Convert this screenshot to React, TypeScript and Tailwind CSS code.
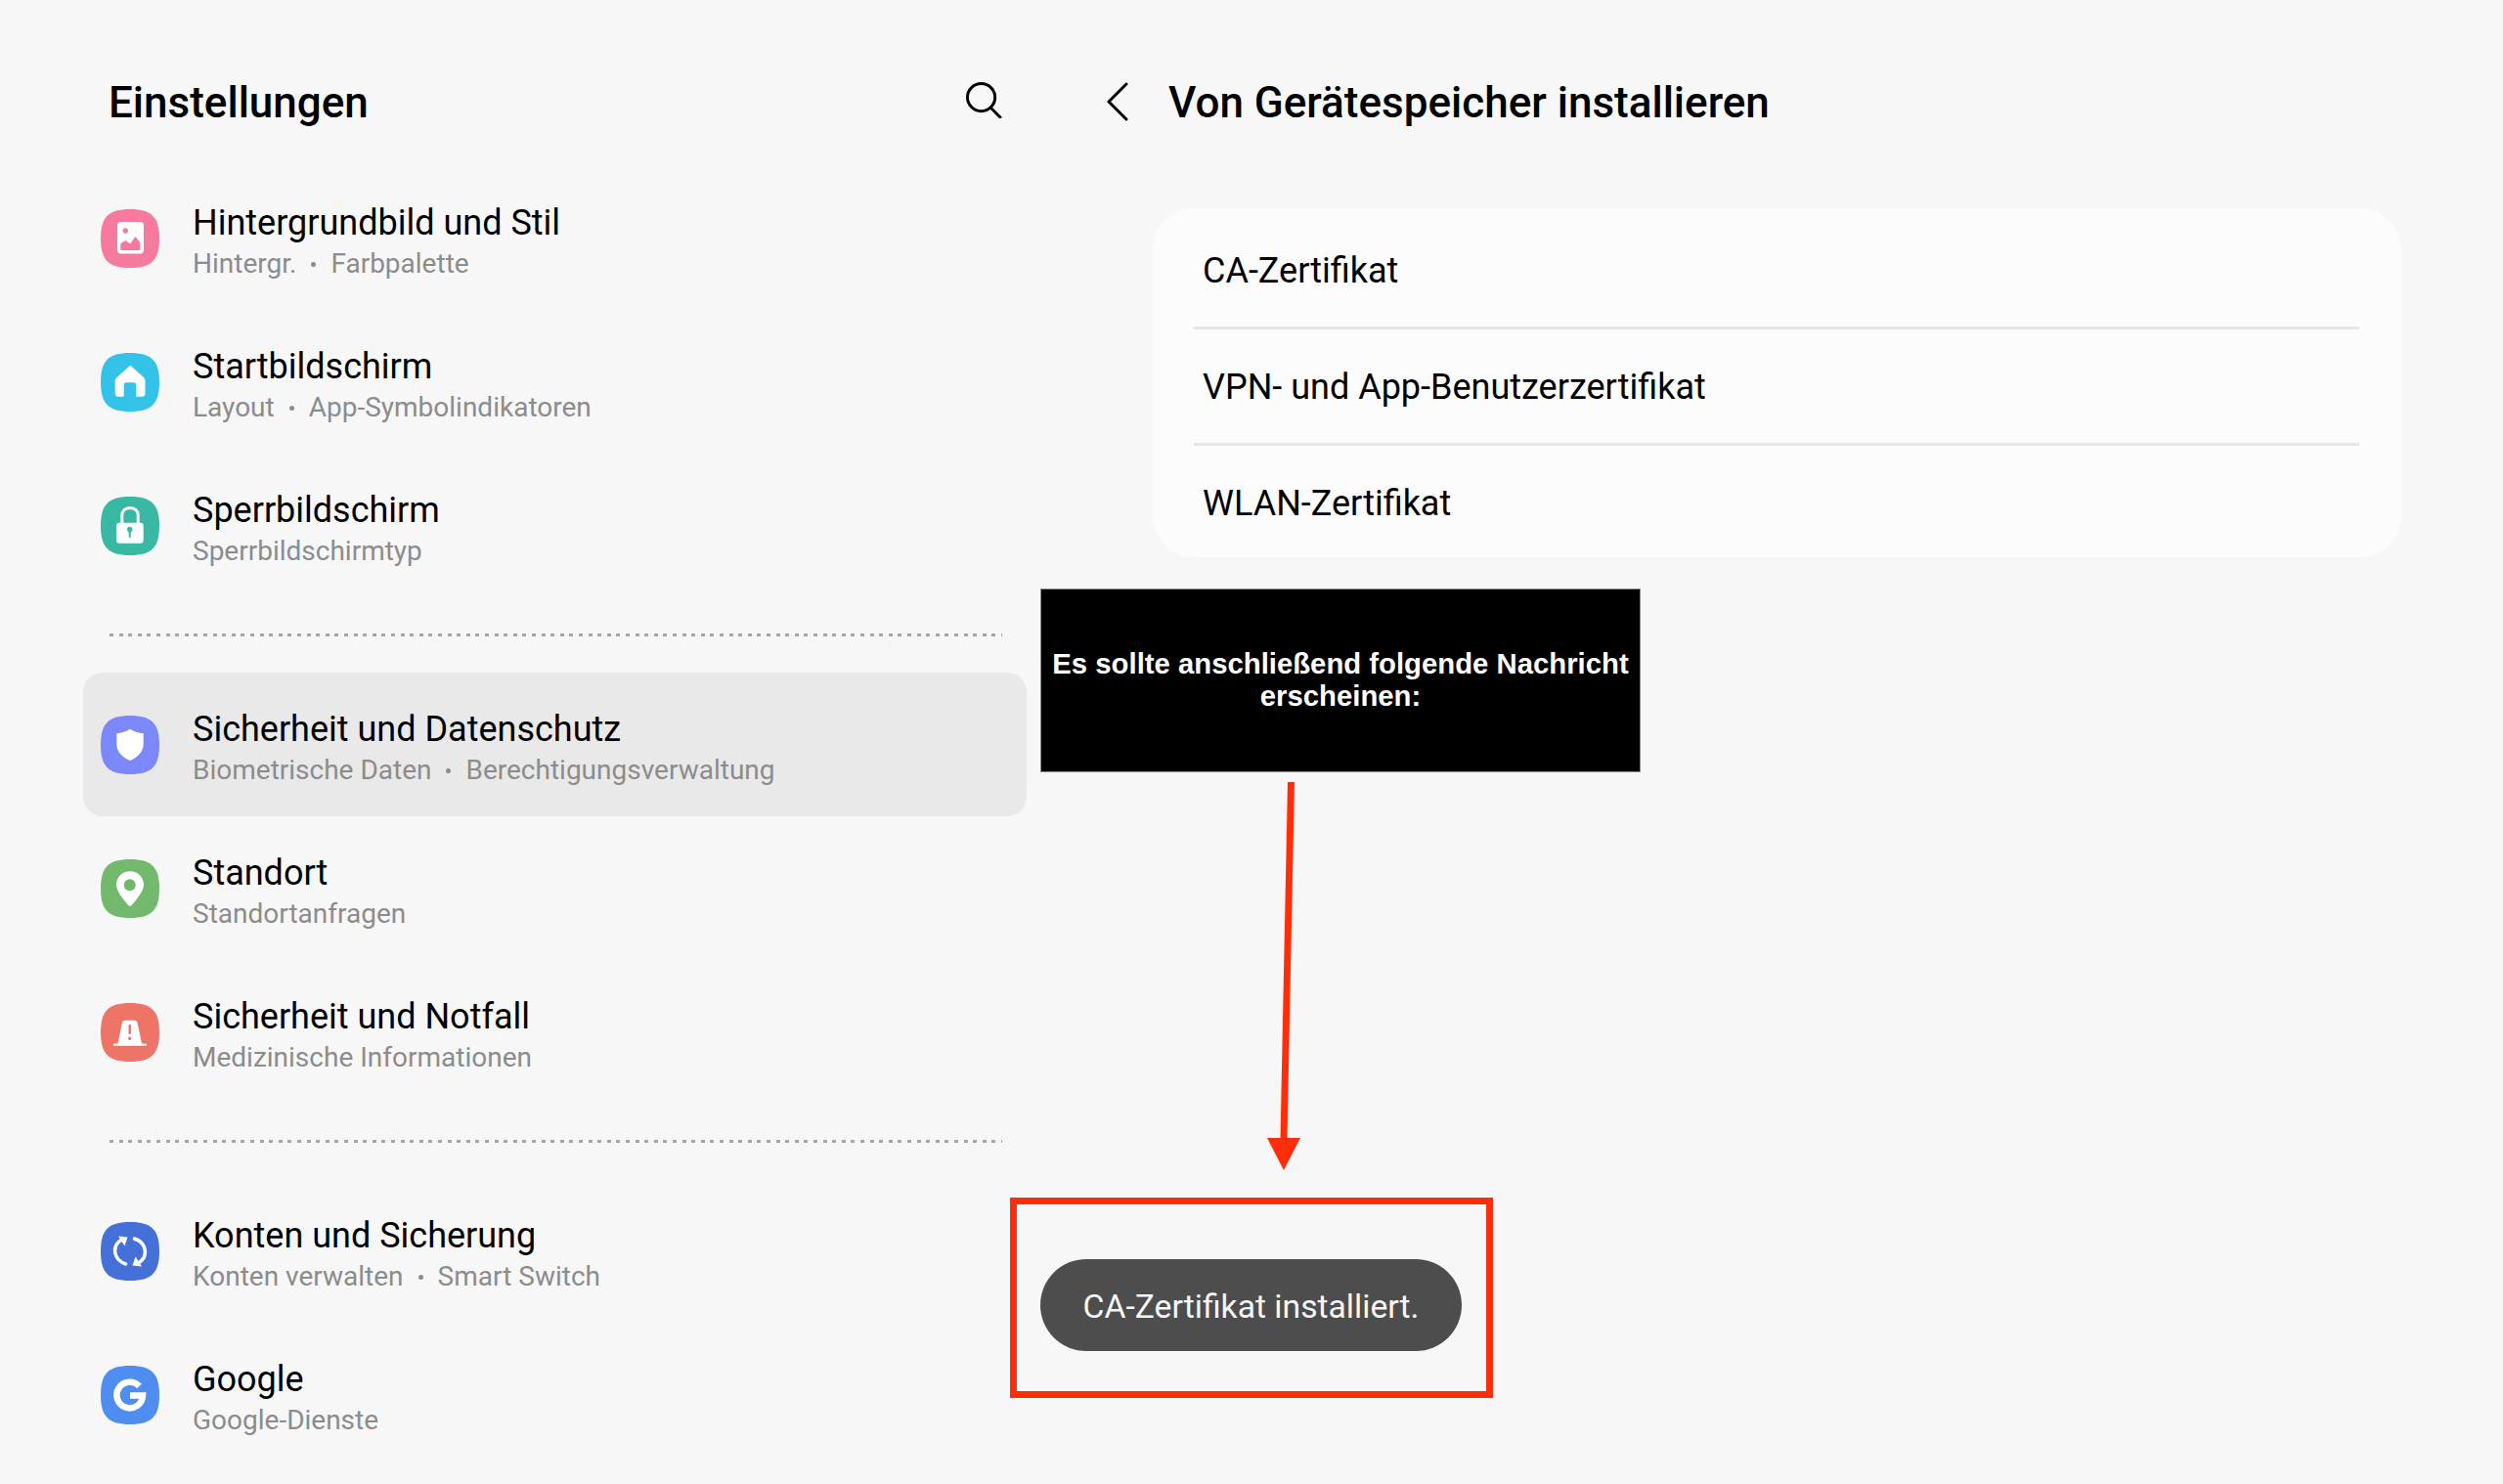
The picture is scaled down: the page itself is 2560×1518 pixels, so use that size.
import React from 'react';

const Squircle: React.FC<{ color: string; children: React.ReactNode }> = ({ color, children }) => (
  <svg viewBox="0 0 60 60" className="w-[60px] h-[60px] shrink-0">
    <path d="M30 0C52 0 60 8 60 30C60 52 52 60 30 60C8 60 0 52 0 30C0 8 8 0 30 0Z" fill={color} />
    {children}
  </svg>
);

const icons: Record<string, React.ReactNode> = {
  wallpaper: (
    <Squircle color="#f67a9d">
      <rect x="17" y="13" width="27" height="32.500" rx="4" fill="#fff" />
      <circle cx="25.300" cy="22" r="2.700" fill="#f67a9d" />
      <path d="M20.300 42V35.300L25.300 32L30.300 35.300L35.300 28L40.300 33.700V42Z" fill="#f67a9d" />
    </Squircle>
  ),
  home: (
    <Squircle color="#33c3e8">
      <path d="M30.300 12.700L44 25Q45.500 26.500 45.500 28.500V41Q45.500 44.700 42 44.700H36.300V33Q36.300 30.300 33.500 30.300H26.500Q23.700 30.300 23.700 33V44.700H18Q14.700 44.700 14.700 41V28.500Q14.700 26.500 16.500 25Z" fill="#fff" />
    </Squircle>
  ),
  lock: (
    <Squircle color="#39b8a4">
      <path d="M21.800 28V19.500C21.800 14.500 25 11.500 30 11.500C35 11.500 38.200 14.500 38.200 19.500V28" fill="none" stroke="#fff" strokeWidth="3" />
      <rect x="16" y="26.700" width="27.700" height="21" rx="3" fill="#fff" />
      <circle cx="29.700" cy="33.500" r="2.700" fill="#39b8a4" />
      <path d="M28.500 34H31L30.700 41.700H28.800Z" fill="#39b8a4" />
    </Squircle>
  ),
  shield: (
    <Squircle color="#7c88f9">
      <path d="M30 13.700Q36 17.500 43.700 18.300V29C43.700 37 38 42.500 30 46C22 42.500 16.300 37 16.300 29V18.300Q24 17.500 30 13.700Z" fill="#fff" />
    </Squircle>
  ),
  pin: (
    <Squircle color="#72b96e">
      <path d="M30 12.300C38 12.300 44 18.300 44 26C44 33 36 42 31.500 47.200Q30 48.500 28.500 47.200C24 42 16 33 16 26C16 18.300 22 12.300 30 12.300Z" fill="#fff" />
      <circle cx="29.700" cy="26.300" r="6" fill="#72b96e" />
    </Squircle>
  ),
  siren: (
    <Squircle color="#ef7468">
      <path d="M25 17.700H34.500Q37 17.700 37.500 20L42 41.500H46Q47 41.500 47 43.700H13Q13 41.500 14 41.500H17.500L22 20Q22.500 17.700 25 17.700Z" fill="#fff" />
      <rect x="28.500" y="22" width="2.500" height="10" rx="1" fill="#ef7468" />
      <circle cx="29.700" cy="36.300" r="1.700" fill="#ef7468" />
    </Squircle>
  ),
  sync: (
    <Squircle color="#4470d8">
      <path d="M21.500 18C11.500 24 12 38 25.500 43" fill="none" stroke="#fff" strokeWidth="3.500" strokeLinecap="round" />
      <path d="M18 14.500L27.500 15.500L24.500 24.500Z" fill="#fff" />
      <path d="M38.500 42C48.500 36 48 22 34.500 17" fill="none" stroke="#fff" strokeWidth="3.500" strokeLinecap="round" />
      <path d="M42 45.500L32.500 44.500L35.500 35.500Z" fill="#fff" />
    </Squircle>
  ),
  google: (
    <Squircle color="#4f8ef0">
      <path d="M39.500 21A13.300 13.300 0 1 0 43 30.500H30" fill="none" stroke="#fff" strokeWidth="6.500" />
    </Squircle>
  ),
};

type Item = { icon: string; title: string; sub: string[]; active?: boolean };

const groups: Item[][] = [
  [
    { icon: 'wallpaper', title: 'Hintergrundbild und Stil', sub: ['Hintergr.', 'Farbpalette'] },
    { icon: 'home', title: 'Startbildschirm', sub: ['Layout', 'App-Symbolindikatoren'] },
    { icon: 'lock', title: 'Sperrbildschirm', sub: ['Sperrbildschirmtyp'] },
  ],
  [
    { icon: 'shield', title: 'Sicherheit und Datenschutz', sub: ['Biometrische Daten', 'Berechtigungsverwaltung'], active: true },
    { icon: 'pin', title: 'Standort', sub: ['Standortanfragen'] },
    { icon: 'siren', title: 'Sicherheit und Notfall', sub: ['Medizinische Informationen'] },
  ],
  [
    { icon: 'sync', title: 'Konten und Sicherung', sub: ['Konten verwalten', 'Smart Switch'] },
    { icon: 'google', title: 'Google', sub: ['Google-Dienste'] },
  ],
];

const SettingsRow: React.FC<{ item: Item }> = ({ item }) => (
  <div className={`h-[147px] flex items-center gap-[34px] pl-[18px] rounded-[20px] ${item.active ? 'bg-[#e9e9e9]' : ''}`}>
    {icons[item.icon]}
    <div className="flex flex-col pt-[11px]">
      <span className="text-[36px] leading-[42px] text-black">{item.title}</span>
      <span className="text-[28px] leading-[42px] text-[#8c8c8c] flex items-center">
        {item.sub.map((s, i) => (
          <React.Fragment key={s}>
            {i > 0 && <span className="w-[5px] h-[5px] rounded-full bg-[#8c8c8c] mx-[15px]" />}
            {s}
          </React.Fragment>
        ))}
      </span>
    </div>
  </div>
);

const certs = ['CA-Zertifikat', 'VPN- und App-Benutzerzertifikat', 'WLAN-Zertifikat'];

export default function App() {
  return (
    <div className="relative w-[2560px] h-[1518px] overflow-hidden bg-[#f7f7f7] flex font-['Roboto',sans-serif]">
      {/* settings list */}
      <div className="w-[1065px] shrink-0 pl-[85px] pr-[15px]">
        <div className="h-[170px] flex items-start justify-between pt-[75px] pl-[26px] pr-[25px]">
          <h1 className="text-[44px] leading-[60px] font-medium text-black">Einstellungen</h1>
          <svg viewBox="0 0 38 38" className="w-[37px] h-[37px] mt-[9px]" fill="none" stroke="#000" strokeWidth="3" strokeLinecap="round">
            <circle cx="16" cy="16" r="14.500" />
            <path d="M26 27L36 37" />
          </svg>
        </div>
        {groups.map((group, i) => (
          <React.Fragment key={i}>
            {i > 0 && (
              <div className="h-[77px] flex items-center pl-[27px] pr-[25px]">
                <div className="w-full h-[3px] bg-[repeating-linear-gradient(90deg,#a6a6a6_0,#a6a6a6_4px,transparent_4px,transparent_9.6px)]" />
              </div>
            )}
            {group.map((item) => (
              <SettingsRow key={item.title} item={item} />
            ))}
          </React.Fragment>
        ))}
      </div>

      {/* detail pane */}
      <div className="flex-1 pl-[114px] pr-[104px]">
        <div className="h-[170px] flex items-start pt-[75px] -ml-[47px]">
          <svg viewBox="0 0 22 40" className="w-[22px] h-[40px] mt-[9px]" fill="none" stroke="#000" strokeWidth="3" strokeLinecap="round" strokeLinejoin="round">
            <path d="M20 2L2 20L20 38" />
          </svg>
          <h2 className="text-[44px] leading-[60px] font-medium text-black ml-[41px]">Von Gerätespeicher installieren</h2>
        </div>
        <div className="mt-[43px] h-[357px] bg-[#fcfcfc] rounded-[42px] pl-[42px] pr-[43px] pt-[5px] flex flex-col">
          {certs.map((c, i) => (
            <div key={c} className={`h-[119px] shrink-0 flex items-center border-b-[3px] ${i < 2 ? 'border-[#e6e6e6]' : 'border-transparent'}`}>
              <span className="text-[36px] text-black pl-[9px] pt-[2px]">{c}</span>
            </div>
          ))}
        </div>
      </div>

      {/* annotations */}
      <div className="absolute left-[1064px] top-[602px] w-[614px] h-[188px] bg-black border border-[#8a8a8a] flex items-center justify-center text-center pb-[2px]">
        <p className="font-['Liberation_Sans',sans-serif] font-bold text-[29.3px] leading-[33px] text-white">
          Es sollte anschließend folgende Nachricht
          <br />
          erscheinen:
        </p>
      </div>
      <svg className="absolute left-[1290px] top-[795px] w-[50px] h-[410px]" viewBox="1290 795 50 410" fill="#ff2e0a">
        <path d="M1317 800H1324L1316.500 1165H1309.500Z" />
        <path d="M1296 1164H1330L1313 1197Z" />
      </svg>
      <div className="absolute left-[1033px] top-[1225px] w-[494px] h-[205px] border-[7px] border-[#ff2e0a] pl-[24px] pt-[56px]">
        <div className="w-[431px] h-[94px] rounded-full bg-[#4d4d4d] flex items-center justify-center pt-[5px] text-[33.7px] text-[#f7f7f7]">
          CA-Zertifikat installiert.
        </div>
      </div>
    </div>
  );
}
